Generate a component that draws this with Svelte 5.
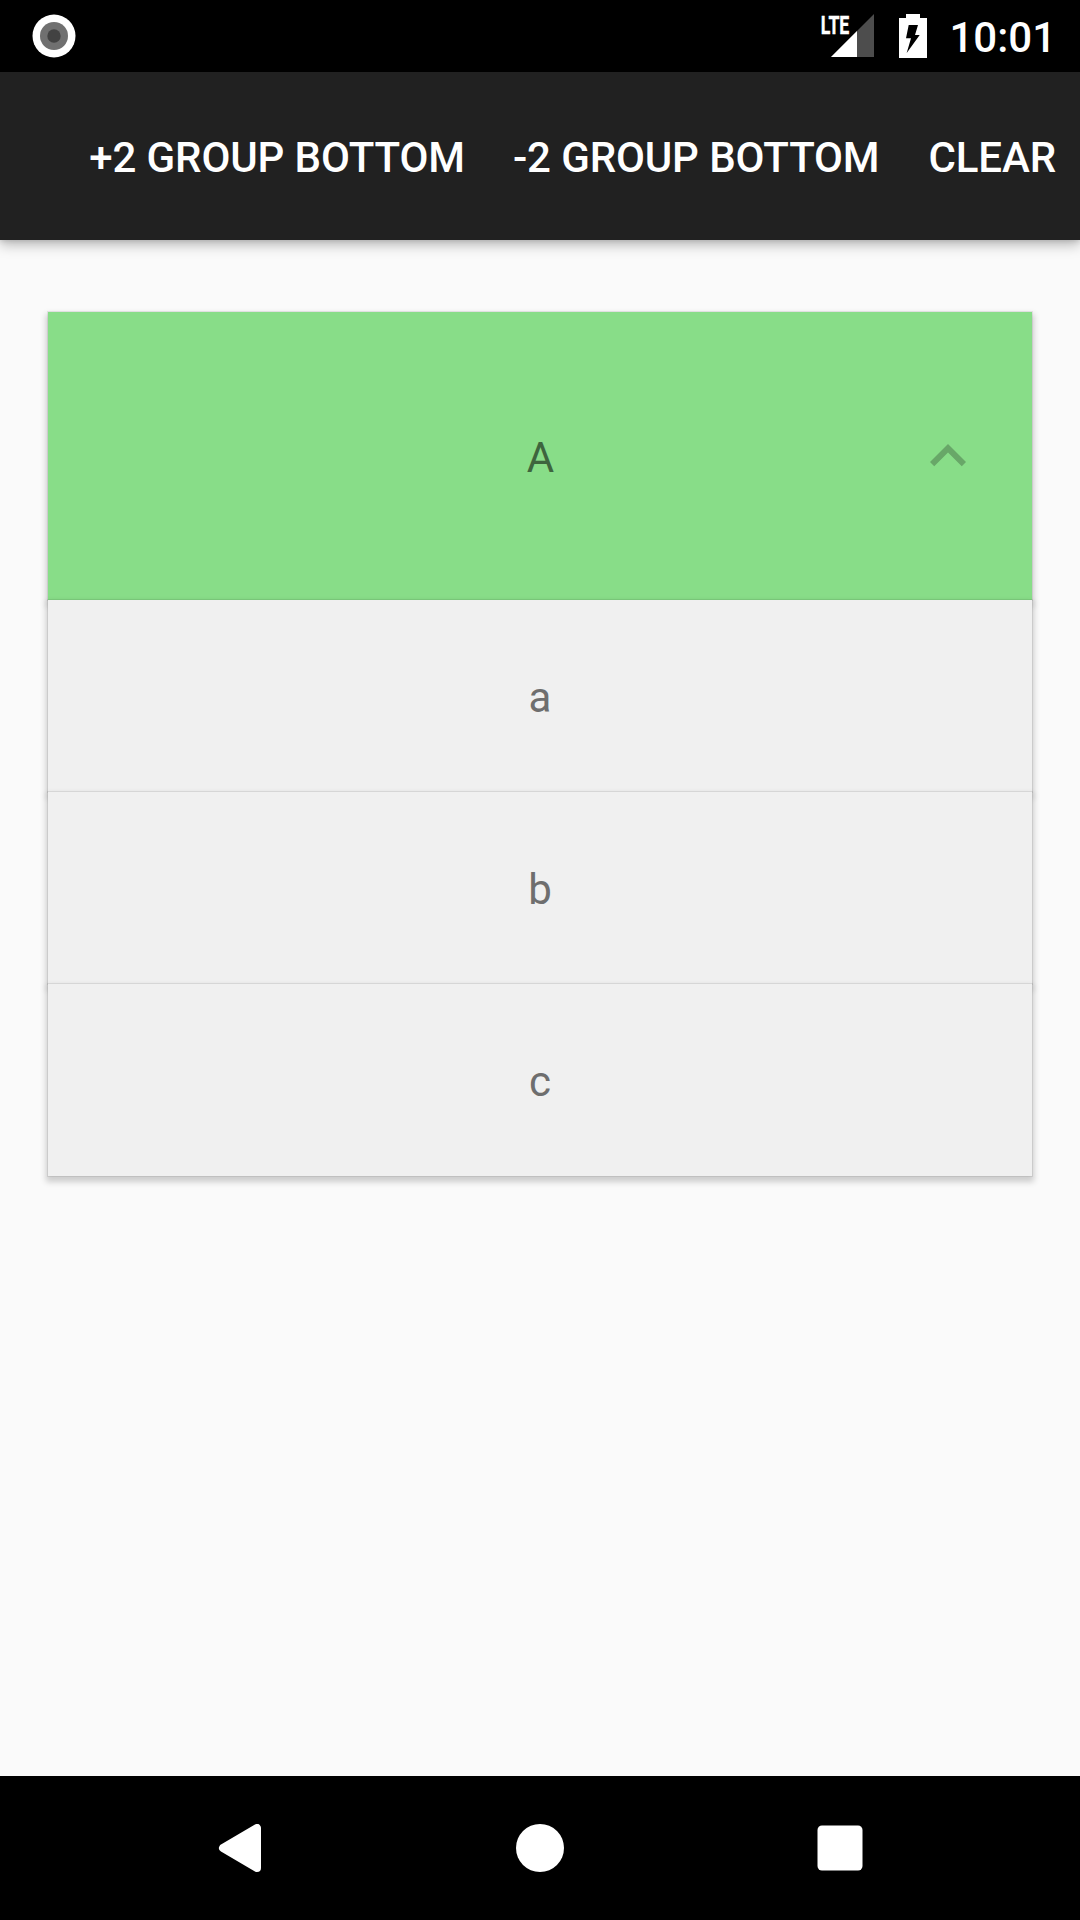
<script>
  const actions = ['+2 GROUP BOTTOM', '-2 GROUP BOTTOM', 'CLEAR'];
  const group = 'A';
  const children = ['a', 'b', 'c'];
</script>

<div class="screen">
  <header class="status">
    <svg class="camera" width="44" height="44" viewBox="0 0 44 44">
      <circle cx="22" cy="22" r="21.5" fill="#fff" />
      <circle cx="22" cy="22" r="14" fill="#707070" />
      <circle cx="22" cy="22" r="6.7" fill="#424242" />
    </svg>
    <div class="indicators">
      <svg class="signal" width="54" height="44" viewBox="0 0 54 44">
        <path d="M11 43 54 0V43Z" fill="#4d4d4d" />
        <path d="M11 43 37 17V43Z" fill="#fff" />
        <text class="lte" x="0.8" y="20" textLength="28.5" lengthAdjust="spacingAndGlyphs">LTE</text>
      </svg>
      <svg class="battery" width="28" height="44" viewBox="0 0 28 44">
        <path d="M7 0H21V4H28V44H0V4H7Z" fill="#fff" />
        <path d="M9.7 11H19L16 21H20.7L7.7 39L12 24.3H7Z" fill="#000" />
      </svg>
      <span class="clock">10:01</span>
    </div>
  </header>

  <nav class="appbar">
    {#each actions as action}
      <button>{action}</button>
    {/each}
  </nav>

  <main>
    <div class="row group">
      <span>{group}</span>
      <svg class="chevron" width="72" height="72" viewBox="0 0 24 24">
        <path d="M12 8l-6 6 1.41 1.41L12 10.83l4.59 4.58L18 14z" />
      </svg>
    </div>
    {#each children as child}
      <div class="row"><span>{child}</span></div>
    {/each}
  </main>

  <footer>
    <svg width="48" height="48" viewBox="0 0 48 48">
      <path d="M41 4V44L7 24Z" />
    </svg>
    <svg width="48" height="48" viewBox="0 0 48 48"><circle cx="24" cy="24" r="24" /></svg>
    <svg width="48" height="48" viewBox="0 0 48 48"><rect x="1.5" y="1.5" width="45" height="45" rx="4.5" /></svg>
  </footer>
</div>

<style>
  :global(body) {
    margin: 0;
    background: #fafafa;
  }
  .screen {
    display: flex;
    flex-direction: column;
    width: 1080px;
    height: 1920px;
    overflow: hidden;
    background: #fafafa;
    font-family: Roboto, sans-serif;
    font-size: 42px;
  }
  .status {
    display: flex;
    justify-content: space-between;
    height: 72px;
    flex: none;
    box-sizing: border-box;
    padding: 14px 24px 0 32px;
    background: #000;
    color: #fff;
  }
  .indicators {
    display: flex;
    align-items: flex-start;
  }
  .signal {
    overflow: visible;
  }
  .battery {
    margin-left: 25px;
  }
  .clock {
    margin-left: 22px;
    font-weight: 500;
    line-height: 44px;
    padding-top: 2px;
  }
  .lte {
    font-size: 26.5px;
    font-weight: 700;
    fill: #fff;
    stroke: #fff;
    stroke-width: 0.4px;
  }
  .appbar {
    display: flex;
    justify-content: flex-end;
    align-items: center;
    gap: 48px;
    flex: none;
    height: 168px;
    box-sizing: border-box;
    padding: 3px 24px 0 0;
    background: #212121;
    box-shadow: 0 5px 12px rgba(0, 0, 0, 0.26), 0 1px 5px rgba(0, 0, 0, 0.12);
  }
  button {
    margin: 0;
    padding: 0;
    border: 0;
    background: none;
    color: #fff;
    font: 500 42px/50px Roboto, sans-serif;
    letter-spacing: -0.12px;
    white-space: nowrap;
  }
  button:last-child {
    margin-left: 1px;
  }
  main {
    flex: 1;
    padding: 72px 48px;
  }
  .row {
    display: grid;
    place-items: center;
    height: 192px;
    background: #f0f0f0;
    color: #6e6e6e;
    box-shadow: 0 0 0 1px rgba(0, 0, 0, 0.07), 0 4px 6px 2px rgba(0, 0, 0, 0.18);
  }
  .row span {
    padding-top: 2px;
  }
  .group {
    grid-template-columns: 120px 1fr 120px;
    height: 288px;
    background: #88dd88;
    color: #3e653e;
  }
  .group span {
    grid-column: 2;
    padding-left: 1px;
  }
  .chevron {
    justify-self: start;
    fill: #68a768;
  }
  footer {
    display: flex;
    justify-content: center;
    align-items: center;
    gap: 252px;
    flex: none;
    height: 144px;
    background: #000;
  }
  footer svg {
    fill: #fff;
  }
  footer path {
    stroke: #fff;
    stroke-width: 8px;
    stroke-linejoin: round;
  }
</style>
